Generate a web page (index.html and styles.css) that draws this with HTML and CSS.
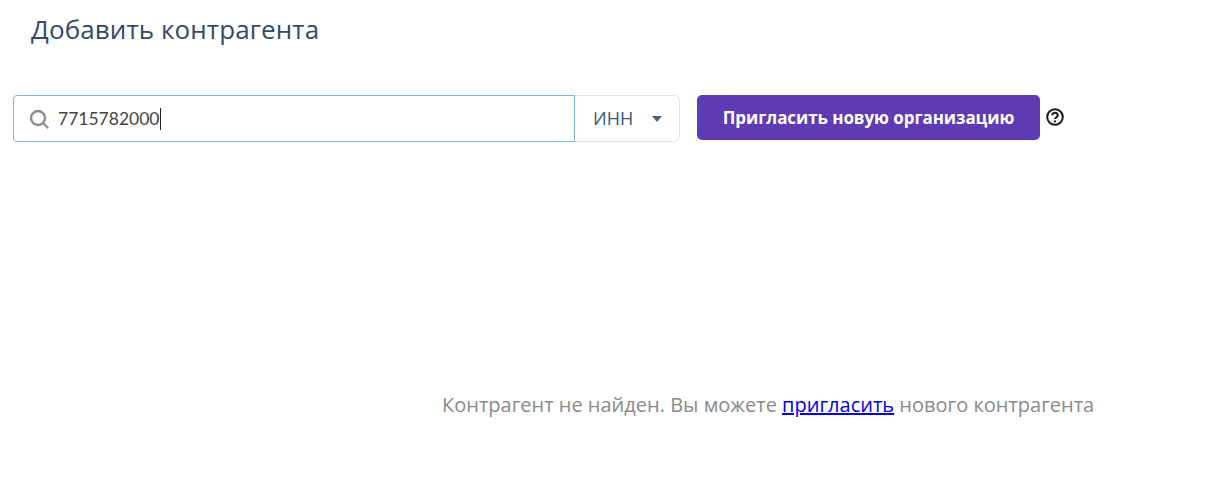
FILE: index.html
```html
<!DOCTYPE html>
<html lang="ru">
<head>
<meta charset="utf-8">
<title>Добавить контрагента</title>
<link rel="stylesheet" href="styles.css">
</head>
<body>
<main class="page">
  <h1 class="title">Добавить контрагента</h1>
  <div class="toolbar">
    <div class="search">
      <svg class="search-icon" width="20" height="20" viewBox="0 0 20 20" fill="none" stroke="#8f8f8f" stroke-width="2.400"><circle cx="9" cy="9" r="7"/><path d="M14 14l4.500 4.500" stroke-linecap="round"/></svg>
      <span class="value">7715782000</span><span class="caret"></span>
    </div>
    <div class="select"><span class="select-label">ИНН</span><span class="arrow"></span></div>
    <button class="invite">Пригласить новую организацию</button>
    <svg class="help" width="18" height="18" viewBox="0 0 18 18" fill="none" stroke="#1a1a1a"><circle cx="9" cy="9" r="7.800" stroke-width="2"/><path d="M6.300 7.200a2.700 2.400 0 1 1 4 2.100c-.9.500-1.300.8-1.300 1.700" stroke-width="2"/><circle cx="9" cy="13.400" r="1.100" fill="#1a1a1a" stroke="none"/></svg>
  </div>
  <p class="empty">Контрагент не найден. Вы можете <a href="#">пригласить</a> нового контрагента</p>
</main>
</body>
</html>
```
FILE: styles.css
```css
* { box-sizing: border-box; }
html, body { margin: 0; background: #fff; }
.page { width: 1218px; height: 502px; overflow: hidden; }
.title {
  margin: 0;
  padding: 11px 0 0 31px;
  font: 400 26px/36px "Open Sans", sans-serif;
  letter-spacing: 0.1px;
  color: #34496b;
}
.toolbar {
  display: flex;
  align-items: flex-start;
  margin: 48px 0 0 13px;
}
.search {
  width: 562px;
  height: 47px;
  display: flex;
  align-items: center;
  padding-left: 15px;
  border: 1px solid #7db4de;
  border-radius: 4px 0 0 4px;
  font: 400 17.500px "Lato", sans-serif;
  color: #444;
}
.search-icon { flex: none; margin-right: 9px; }
.caret { width: 1px; height: 22px; background: #222; }
.select {
  width: 105px;
  height: 47px;
  display: flex;
  align-items: center;
  padding-left: 18px;
  border: 1px solid #dfe2e6;
  border-left: 0;
  border-radius: 0 6px 6px 0;
  font: 400 18px "Open Sans", sans-serif;
  color: #3a5580;
}
.select-label { margin-bottom: 2px; }
.arrow {
  margin-left: 19px;
  margin-top: 1px;
  border: 5.500px solid transparent;
  border-top: 6px solid #4a6080;
  border-bottom: 0;
}
.invite {
  width: 343px;
  height: 45px;
  margin-left: 17px;
  padding: 0;
  border: 0;
  border-radius: 5px;
  background: #5e3ab5;
  color: #fff;
  font: 700 17px "Open Sans", sans-serif;
  letter-spacing: -0.07px;
}
.help { margin: 13px 0 0 6px; flex: none; }
.empty {
  margin: 249px 0 0 442px;
  font: 400 20px/28px "Open Sans", sans-serif;
  color: #8a8a8a;
  white-space: nowrap;
}
.empty a { color: #0000ee; text-decoration: underline; }
```
